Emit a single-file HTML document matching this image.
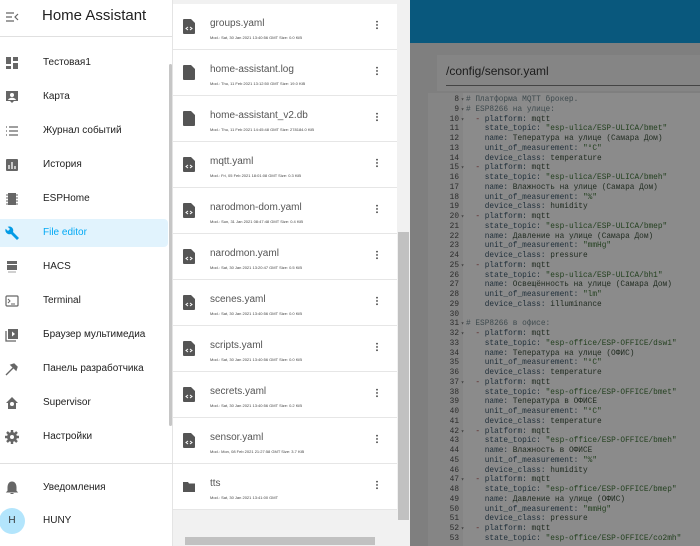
<!DOCTYPE html>
<html style="width:700px;height:546px;overflow:hidden"><head><meta charset="utf-8"><style>
*{margin:0;padding:0;box-sizing:border-box}
body{width:700px;height:546px;overflow:hidden;position:relative;font-family:"Liberation Sans","DejaVu Sans",sans-serif;background:#7f7f7f}
#side{position:absolute;left:0;top:0;width:173px;height:546px;background:#fff;border-right:1px solid #e4e4e4}
#side .hd{height:37px;border-bottom:1px solid #e0e0e0;position:relative}
#side .hd .t{position:absolute;left:42px;top:7px;font-size:15px;color:#212121}
.it{position:absolute;left:0;width:168px;height:28px;font-size:10px;color:#212121}
.it .tx{position:absolute;left:43px;top:8px}
.it svg{position:absolute;left:5px;top:7px;width:14px;height:14px}
.sel{background:#e1f3fd;border-radius:0 4px 4px 0}
.sel .tx{color:#03a9f4}
#sbar{position:absolute;left:169px;top:64px;width:3px;height:362px;background:#c6c6c6;border-radius:2px}
#files{position:absolute;left:173px;top:0;width:224px;height:546px;background:#f1f1f1;overflow:hidden}
.row{position:absolute;left:0;width:224px;height:46px;background:#fff;border-bottom:1px solid #e6e6e6}
.row .n{position:absolute;left:37px;top:14px;font-size:10px;color:#555}
.row .m{position:absolute;left:37px;top:31px;font-size:4px;color:#444;white-space:nowrap}
.row .ic{position:absolute;left:10px;top:15px;width:12px;height:15px}
.row .dots{position:absolute;left:203px;top:16px;width:2px;height:10px;background:radial-gradient(circle,#666 0.9px,transparent 1px) 0 0/2px 3.3px}
#vs{position:absolute;left:397px;top:0;width:13px;height:546px;background:#f1f1f1}
#vs .th{position:absolute;left:1px;top:232px;width:11px;height:288px;background:#c1c1c1}
#hs{position:absolute;left:173px;top:536px;width:224px;height:10px;background:#f1f1f1}
#hs .th{position:absolute;left:12px;top:1px;width:190px;height:8px;background:#c1c1c1}
#hdr{position:absolute;left:410px;top:0;width:290px;height:43px;background:#09587d}
#card{position:absolute;left:437px;top:55px;width:263px;height:36px;background:#858585}
#card .p{position:absolute;left:9px;top:9px;font-size:12px;color:#1c1c1c}
#card .u{position:absolute;left:9px;top:30px;right:0;height:1px;background:#444}
#ed{position:absolute;left:428px;top:93px;width:272px;height:453px;background:#8b8b8b;overflow:hidden}
#gut{position:absolute;left:0;top:0;width:35px;height:453px;background:#858585}
#code{position:absolute;left:0;top:2px;font-family:"Liberation Mono",monospace;font-size:7.8px;color:#1f2a1f}
#code div{height:9.76px;line-height:9.76px;white-space:pre;overflow:hidden;width:272px}
.ln{display:inline-block;width:31px;text-align:right;color:#2c2c2c}
.f{display:inline-block;width:7px;color:#444;font-size:6px;text-align:center}
.c{color:#3e4a4e}.s{color:#23401f}.k{color:#1f2f3a}.d{color:#5a2222}
</style></head><body>
<div id="side">
 <div class="hd"><svg style="position:absolute;left:5px;top:11px" width="14" height="12" viewBox="0 0 14 12"><path d="M1 2h8M1 6h6M1 10h8M13 3l-3 3 3 3" stroke="#666" stroke-width="1.2" fill="none"/></svg><div class="t">Home Assistant</div></div>
 <div class="it" style="top:49px"><svg viewBox="0 0 14 14"><path d="M1 1h5v7H1zM8 1h5v4H8zM8 7h5v6H8zM1 10h5v3H1z" fill="#666"/></svg><span class="tx">Тестовая1</span></div>
 <div class="it" style="top:83px"><svg viewBox="0 0 14 14"><path d="M1 1h12v10H9l-2 2-2-2H1z" fill="#666"/><circle cx="7" cy="5" r="2" fill="#fff"/><path d="M3 10c1-3 7-3 8 0" fill="#fff"/></svg><span class="tx">Карта</span></div>
 <div class="it" style="top:117px"><svg viewBox="0 0 14 14"><path d="M1 3h1M1 7h1M1 11h1M4 3h9M4 7h9M4 11h9" stroke="#666" stroke-width="1.3"/></svg><span class="tx">Журнал событий</span></div>
 <div class="it" style="top:151px"><svg viewBox="0 0 14 14"><rect x="1" y="1" width="12" height="12" rx="1" fill="#666"/><path d="M4 11V7M7 11V4M10 11V8" stroke="#fff" stroke-width="1.3"/></svg><span class="tx">История</span></div>
 <div class="it" style="top:185px"><svg viewBox="0 0 14 14"><rect x="3" y="1" width="8" height="12" fill="#666"/><path d="M1 3h2M1 6h2M1 9h2M1 12h2M11 3h2M11 6h2M11 9h2M11 12h2" stroke="#666"/></svg><span class="tx">ESPHome</span></div>
 <div class="it sel" style="top:219px"><svg viewBox="0 0 14 14"><path d="M13 11l-6-6c.6-1.6.2-3.3-1-4.5C4.7-.7 3 -.8 1.7-.2L4 2 2 4 -.3 1.7C-1 3 -.7 4.7.5 6c1.2 1.2 3 1.6 4.5 1L11 13z" fill="#039be5" transform="translate(1 1)"/></svg><span class="tx">File editor</span></div>
 <div class="it" style="top:253px"><svg viewBox="0 0 14 14"><path d="M2 1h10v3H2zM2 5h10v5H2z" fill="#666"/><path d="M3 12h8" stroke="#888" stroke-width=".8"/></svg><span class="tx">HACS</span></div>
 <div class="it" style="top:287px"><svg viewBox="0 0 14 14"><rect x="1" y="2" width="12" height="10" rx="1" fill="none" stroke="#666" stroke-width="1.2"/><path d="M3 5l2 2-2 2M6 10h4" stroke="#666" fill="none"/></svg><span class="tx">Terminal</span></div>
 <div class="it" style="top:321px"><svg viewBox="0 0 14 14"><path d="M1 3v10h10" stroke="#666" fill="none" stroke-width="1.3"/><rect x="3" y="1" width="10" height="10" fill="#666"/><path d="M7 3.5v5l3-2.5z" fill="#fff"/></svg><span class="tx">Браузер мультимедиа</span></div>
 <div class="it" style="top:355px"><svg viewBox="0 0 14 14"><path d="M1 13l7-7M6 3l3-1 3 3-1 3z" stroke="#666" stroke-width="1.4" fill="#666"/></svg><span class="tx">Панель разработчика</span></div>
 <div class="it" style="top:389px"><svg viewBox="0 0 14 14"><path d="M7 1l6 6h-2v6H3V7H1z" fill="#666"/><circle cx="7" cy="8" r="2" fill="#fff"/></svg><span class="tx">Supervisor</span></div>
 <div class="it" style="top:423px"><svg viewBox="0 0 14 14"><circle cx="7" cy="7" r="5" fill="#666"/><path d="M7 0v14M0 7h14M2 2l10 10M12 2L2 12" stroke="#666" stroke-width="2.4"/><circle cx="7" cy="7" r="2" fill="#fff"/></svg><span class="tx">Настройки</span></div>
 <div style="position:absolute;left:0;top:463px;width:173px;height:1px;background:#e0e0e0"></div>
 <div class="it" style="top:474px"><svg viewBox="0 0 14 14"><path d="M7 1c-3 0-4 3-4 5v4l-1 1h10l-1-1V6c0-2-1-5-4-5zM5.5 12.5h3" stroke="#666" fill="#666"/></svg><span class="tx">Уведомления</span></div>
 <div style="position:absolute;left:-1px;top:508px;width:26px;height:26px;border-radius:50%;background:#b3e5fc;font-size:10px;color:#333;text-align:center;line-height:26px">H</div>
 <div class="it" style="top:507px"><span class="tx">HUNY</span></div>
 <div id="sbar"></div>
</div>
<div id="files">
<svg width="0" height="0" style="position:absolute"><defs><symbol id="fc" viewBox="0 0 12 15"><path d="M1 0h7l4 4v10a1 1 0 0 1-1 1H1a1 1 0 0 1-1-1V1a1 1 0 0 1 1-1z" fill="#555"/><path d="M5 8l-2 1.5L5 11M7 8l2 1.5L7 11" stroke="#fff" fill="none" stroke-width="1"/></symbol><symbol id="ff" viewBox="0 0 12 15"><path d="M1 0h7l4 4v10a1 1 0 0 1-1 1H1a1 1 0 0 1-1-1V1a1 1 0 0 1 1-1z" fill="#555"/></symbol></defs></svg>
<div class="row" style="top:4px"><svg class="ic"><use href="#fc"/></svg><div class="n">groups.yaml</div><div class="m">Mod.: Sat, 30 Jan 2021 13:40:56 GMT Size: 0.0 KiB</div><div class="dots"></div></div>
<div class="row" style="top:50px"><svg class="ic"><use href="#ff"/></svg><div class="n">home-assistant.log</div><div class="m">Mod.: Thu, 11 Feb 2021 13:12:50 GMT Size: 19.0 KiB</div><div class="dots"></div></div>
<div class="row" style="top:96px"><svg class="ic"><use href="#ff"/></svg><div class="n">home-assistant_v2.db</div><div class="m">Mod.: Thu, 11 Feb 2021 14:45:48 GMT Size: 278184.0 KiB</div><div class="dots"></div></div>
<div class="row" style="top:142px"><svg class="ic"><use href="#fc"/></svg><div class="n">mqtt.yaml</div><div class="m">Mod.: Fri, 05 Feb 2021 18:01:08 GMT Size: 0.3 KiB</div><div class="dots"></div></div>
<div class="row" style="top:188px"><svg class="ic"><use href="#fc"/></svg><div class="n">narodmon-dom.yaml</div><div class="m">Mod.: Sun, 31 Jan 2021 08:47:48 GMT Size: 0.4 KiB</div><div class="dots"></div></div>
<div class="row" style="top:234px"><svg class="ic"><use href="#fc"/></svg><div class="n">narodmon.yaml</div><div class="m">Mod.: Sat, 30 Jan 2021 13:20:47 GMT Size: 0.5 KiB</div><div class="dots"></div></div>
<div class="row" style="top:280px"><svg class="ic"><use href="#fc"/></svg><div class="n">scenes.yaml</div><div class="m">Mod.: Sat, 30 Jan 2021 13:40:56 GMT Size: 0.0 KiB</div><div class="dots"></div></div>
<div class="row" style="top:326px"><svg class="ic"><use href="#fc"/></svg><div class="n">scripts.yaml</div><div class="m">Mod.: Sat, 30 Jan 2021 13:40:56 GMT Size: 0.0 KiB</div><div class="dots"></div></div>
<div class="row" style="top:372px"><svg class="ic"><use href="#fc"/></svg><div class="n">secrets.yaml</div><div class="m">Mod.: Sat, 30 Jan 2021 13:40:56 GMT Size: 0.2 KiB</div><div class="dots"></div></div>
<div class="row" style="top:418px"><svg class="ic"><use href="#fc"/></svg><div class="n">sensor.yaml</div><div class="m">Mod.: Mon, 08 Feb 2021 21:27:58 GMT Size: 3.7 KiB</div><div class="dots"></div></div>
<div class="row" style="top:464px"><svg class="ic" viewBox="0 0 12 15" style="width:14px;left:9px"><path d="M0 3h5l1 1.5h6V13H0z" fill="#555"/></svg><div class="n">tts</div><div class="m">Mod.: Sat, 30 Jan 2021 13:41:00 GMT</div><div class="dots"></div></div>
</div>
<div id="hs"><div class="th"></div></div>
<div id="vs"><div class="th"></div></div>
<div id="hdr"></div>
<div id="card"><div class="p">/config/sensor.yaml</div><div class="u"></div></div>
<div id="ed"><div id="gut"></div><div id="code">
<div><span class="ln">8</span><span class="f">▾</span><span class="c"># Платформа MQTT брокер.</span></div>
<div><span class="ln">9</span><span class="f">▾</span><span class="c"># ESP8266 на улице:</span></div>
<div><span class="ln">10</span><span class="f">▾</span>  <span class="d">-</span> <span class="k">platform:</span> mqtt</div>
<div><span class="ln">11</span><span class="f"> </span>    <span class="k">state_topic:</span> <span class="s">"esp-ulica/ESP-ULICA/bmet"</span></div>
<div><span class="ln">12</span><span class="f"> </span>    <span class="k">name:</span> Тепература на улице (Самара Дом)</div>
<div><span class="ln">13</span><span class="f"> </span>    <span class="k">unit_of_measurement:</span> <span class="s">"°C"</span></div>
<div><span class="ln">14</span><span class="f"> </span>    <span class="k">device_class:</span> temperature</div>
<div><span class="ln">15</span><span class="f">▾</span>  <span class="d">-</span> <span class="k">platform:</span> mqtt</div>
<div><span class="ln">16</span><span class="f"> </span>    <span class="k">state_topic:</span> <span class="s">"esp-ulica/ESP-ULICA/bmeh"</span></div>
<div><span class="ln">17</span><span class="f"> </span>    <span class="k">name:</span> Влажность на улице (Самара Дом)</div>
<div><span class="ln">18</span><span class="f"> </span>    <span class="k">unit_of_measurement:</span> <span class="s">"%"</span></div>
<div><span class="ln">19</span><span class="f"> </span>    <span class="k">device_class:</span> humidity</div>
<div><span class="ln">20</span><span class="f">▾</span>  <span class="d">-</span> <span class="k">platform:</span> mqtt</div>
<div><span class="ln">21</span><span class="f"> </span>    <span class="k">state_topic:</span> <span class="s">"esp-ulica/ESP-ULICA/bmep"</span></div>
<div><span class="ln">22</span><span class="f"> </span>    <span class="k">name:</span> Давление на улице (Самара Дом)</div>
<div><span class="ln">23</span><span class="f"> </span>    <span class="k">unit_of_measurement:</span> <span class="s">"mmHg"</span></div>
<div><span class="ln">24</span><span class="f"> </span>    <span class="k">device_class:</span> pressure</div>
<div><span class="ln">25</span><span class="f">▾</span>  <span class="d">-</span> <span class="k">platform:</span> mqtt</div>
<div><span class="ln">26</span><span class="f"> </span>    <span class="k">state_topic:</span> <span class="s">"esp-ulica/ESP-ULICA/bh1"</span></div>
<div><span class="ln">27</span><span class="f"> </span>    <span class="k">name:</span> Освещённость на улице (Самара Дом)</div>
<div><span class="ln">28</span><span class="f"> </span>    <span class="k">unit_of_measurement:</span> <span class="s">"lm"</span></div>
<div><span class="ln">29</span><span class="f"> </span>    <span class="k">device_class:</span> illuminance</div>
<div><span class="ln">30</span><span class="f"> </span></div>
<div><span class="ln">31</span><span class="f">▾</span><span class="c"># ESP8266 в офисе:</span></div>
<div><span class="ln">32</span><span class="f">▾</span>  <span class="d">-</span> <span class="k">platform:</span> mqtt</div>
<div><span class="ln">33</span><span class="f"> </span>    <span class="k">state_topic:</span> <span class="s">"esp-office/ESP-OFFICE/dsw1"</span></div>
<div><span class="ln">34</span><span class="f"> </span>    <span class="k">name:</span> Тепература на улице (ОФИС)</div>
<div><span class="ln">35</span><span class="f"> </span>    <span class="k">unit_of_measurement:</span> <span class="s">"°C"</span></div>
<div><span class="ln">36</span><span class="f"> </span>    <span class="k">device_class:</span> temperature</div>
<div><span class="ln">37</span><span class="f">▾</span>  <span class="d">-</span> <span class="k">platform:</span> mqtt</div>
<div><span class="ln">38</span><span class="f"> </span>    <span class="k">state_topic:</span> <span class="s">"esp-office/ESP-OFFICE/bmet"</span></div>
<div><span class="ln">39</span><span class="f"> </span>    <span class="k">name:</span> Тепература в ОФИСЕ</div>
<div><span class="ln">40</span><span class="f"> </span>    <span class="k">unit_of_measurement:</span> <span class="s">"°C"</span></div>
<div><span class="ln">41</span><span class="f"> </span>    <span class="k">device_class:</span> temperature</div>
<div><span class="ln">42</span><span class="f">▾</span>  <span class="d">-</span> <span class="k">platform:</span> mqtt</div>
<div><span class="ln">43</span><span class="f"> </span>    <span class="k">state_topic:</span> <span class="s">"esp-office/ESP-OFFICE/bmeh"</span></div>
<div><span class="ln">44</span><span class="f"> </span>    <span class="k">name:</span> Влажность в ОФИСЕ</div>
<div><span class="ln">45</span><span class="f"> </span>    <span class="k">unit_of_measurement:</span> <span class="s">"%"</span></div>
<div><span class="ln">46</span><span class="f"> </span>    <span class="k">device_class:</span> humidity</div>
<div><span class="ln">47</span><span class="f">▾</span>  <span class="d">-</span> <span class="k">platform:</span> mqtt</div>
<div><span class="ln">48</span><span class="f"> </span>    <span class="k">state_topic:</span> <span class="s">"esp-office/ESP-OFFICE/bmep"</span></div>
<div><span class="ln">49</span><span class="f"> </span>    <span class="k">name:</span> Давление на улице (ОФИС)</div>
<div><span class="ln">50</span><span class="f"> </span>    <span class="k">unit_of_measurement:</span> <span class="s">"mmHg"</span></div>
<div><span class="ln">51</span><span class="f"> </span>    <span class="k">device_class:</span> pressure</div>
<div><span class="ln">52</span><span class="f">▾</span>  <span class="d">-</span> <span class="k">platform:</span> mqtt</div>
<div><span class="ln">53</span><span class="f"> </span>    <span class="k">state_topic:</span> <span class="s">"esp-office/ESP-OFFICE/co2mh"</span></div>
</div></div>
</body></html>
